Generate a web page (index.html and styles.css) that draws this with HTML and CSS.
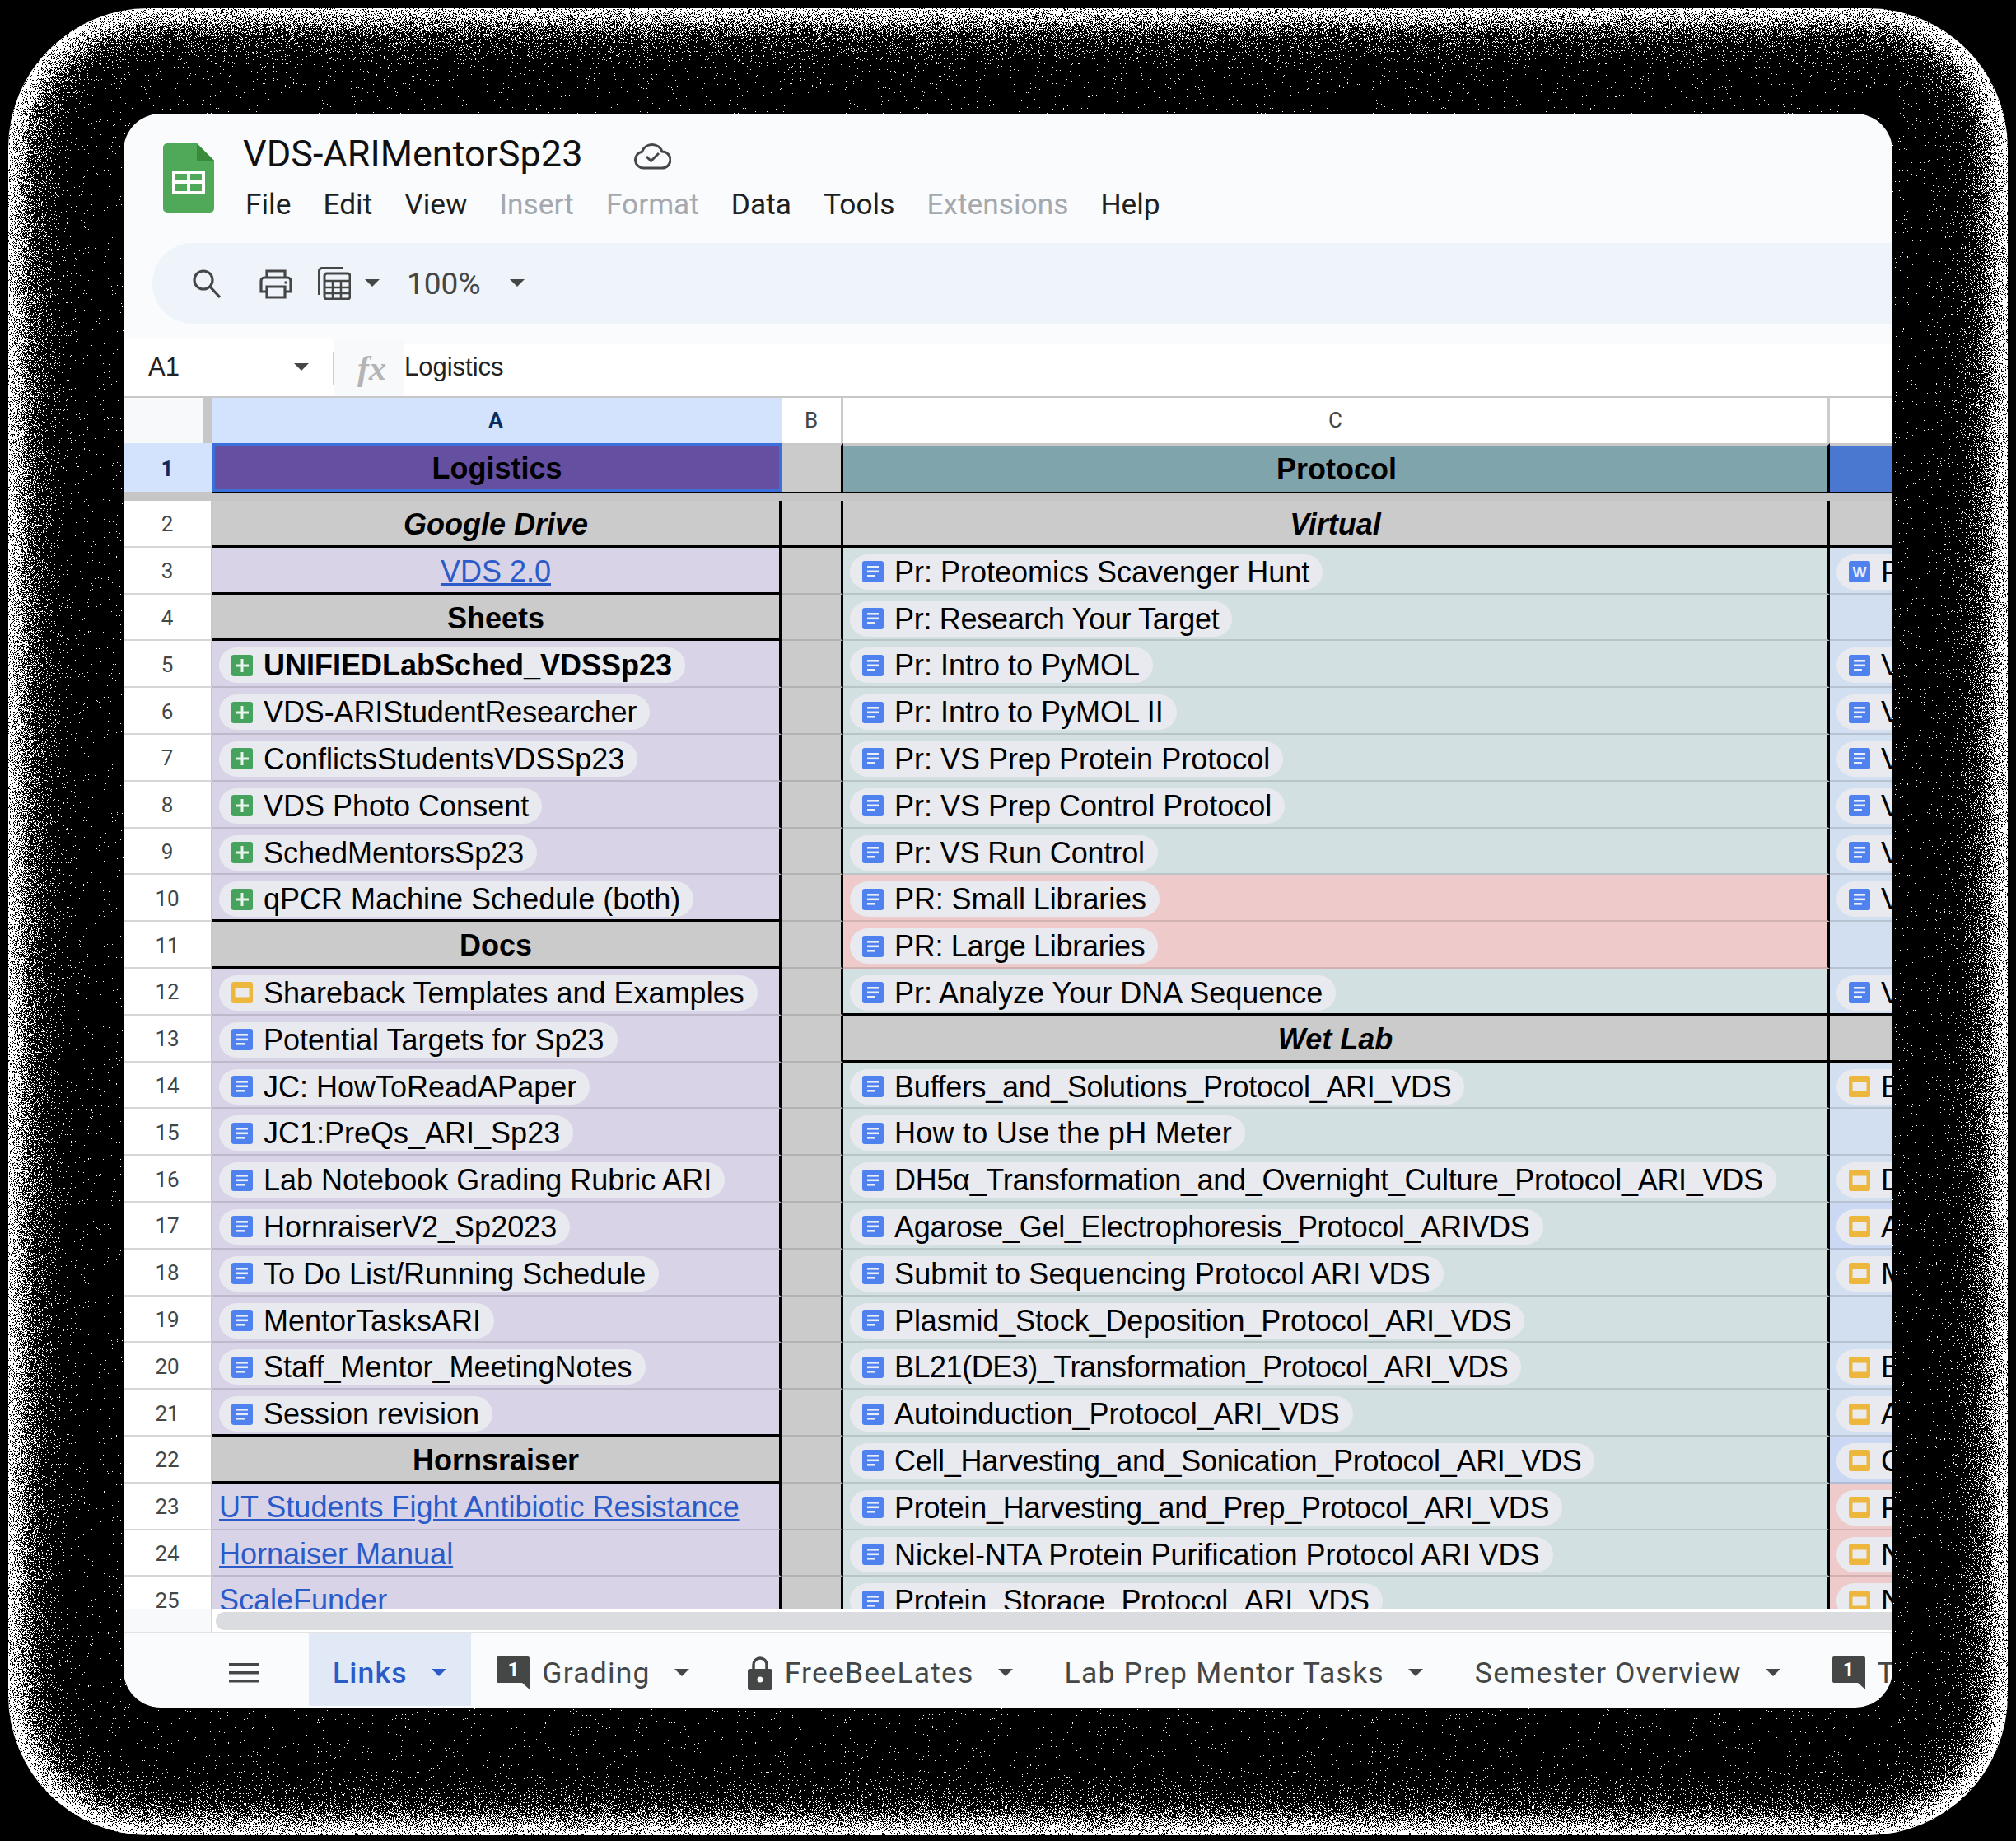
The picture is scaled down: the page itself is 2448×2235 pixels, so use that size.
FILE: index.html
```html
<!DOCTYPE html>
<html lang="en">
<head>
    <meta charset="UTF-8">
    <title>VDS-ARIMentorSp23</title>
    <link rel="stylesheet" href="styles.css">
</head>
<body>
    <svg class="backdrop" width="2448" height="2235" viewBox="0 0 2448 2235">
        <defs>
            <filter id="grain" filterUnits="userSpaceOnUse" x="0" y="0" width="2448" height="2235" color-interpolation-filters="sRGB">
                <feGaussianBlur in="SourceAlpha" stdDeviation="42" result="soft"/>
                <feTurbulence type="fractalNoise" baseFrequency="1.2" numOctaves="1" seed="4"/>
                <feColorMatrix values="0 0 0 0 1  0 0 0 0 1  0 0 0 0 1  1 0 0 0 0" result="noise"/>
                <feComposite in="soft" in2="noise" operator="arithmetic" k1="0" k2="-0.7" k3="1" k4="0.47"/>
                <feComponentTransfer>
                    <feFuncA type="discrete" tableValues="0 1"/>
                </feComponentTransfer>
                <feColorMatrix values="0 0 0 0 1  0 0 0 0 1  0 0 0 0 1  0 0 0 1 0"/>
                <feComposite in2="SourceAlpha" operator="in"/>
            </filter>
        </defs>
        <rect x="10" y="10" width="2428" height="2218" rx="170" fill="#fff" filter="url(#grain)"/>
    </svg>

    <svg class="sprites" width="0" height="0">
        <symbol id="doc" viewBox="0 0 26 26">
            <rect width="26" height="26" rx="3" fill="#4f82ee"/>
            <rect x="6" y="6" width="14" height="2.6" fill="#e9eefb"/>
            <rect x="6" y="11.5" width="14" height="2.6" fill="#e9eefb"/>
            <rect x="6" y="17" width="10" height="2.6" fill="#e9eefb"/>
        </symbol>
        <symbol id="slide" viewBox="0 0 26 26">
            <rect width="26" height="26" rx="3" fill="#ecb73c"/>
            <rect x="4.5" y="7.5" width="17" height="11" fill="#ebebeb"/>
        </symbol>
        <symbol id="sheet" viewBox="0 0 26 26">
            <rect width="26" height="26" rx="3" fill="#46a35e"/>
            <rect x="5" y="11.5" width="16" height="3" fill="#e9f4ec"/>
            <rect x="11.5" y="5" width="3" height="16" fill="#e9f4ec"/>
        </symbol>
        <symbol id="caret" viewBox="0 0 18 10">
            <path d="M0 0h18l-9 9z" fill="#444746"/>
        </symbol>
        <symbol id="note" viewBox="0 0 40 40">
            <path d="M2 0h36a2 2 0 0 1 2 2v38l-9-8H2a2 2 0 0 1-2-2V2a2 2 0 0 1 2-2z" fill="#444746"/>
        </symbol>
    </svg>

    <div class="window">
        <header class="titlebar">
            <svg class="logo" width="62" height="84" viewBox="0 0 62 84">
                <path d="M5 0h36l21 21v58a5 5 0 0 1-5 5H5a5 5 0 0 1-5-5V5a5 5 0 0 1 5-5z" fill="#4fa958"/>
                <path d="M41 0l21 21H41z" fill="#3a8a3c"/>
                <path d="M11 33h40v29H11zM15 37v8h14v-8zM33 37v8h14v-8zM15 49v9h14v-9zM33 49v9h14v-9z" fill="#fff" fill-rule="evenodd"/>
            </svg>
            <div class="titlebox">
                <div class="doctitle">
                    <span class="docname">VDS-ARIMentorSp23</span>
                    <svg class="cloud" width="46" height="34" viewBox="0 0 46 34" fill="none" stroke="#444746" stroke-width="3">
                        <path d="M12 32a10 10 0 0 1-1.500-19.800A13 13 0 0 1 35 12a10 10 0 0 1 0 20z"/>
                        <path d="M16 18l5.500 5.500L31 14"/>
                    </svg>
                </div>
                <nav class="menu">
                    <span>File</span><span>Edit</span><span>View</span>
                    <span class="off">Insert</span><span class="off">Format</span>
                    <span>Data</span><span>Tools</span>
                    <span class="off">Extensions</span><span>Help</span>
                </nav>
            </div>
        </header>

        <div class="toolbar">
            <svg class="tool-search" width="34" height="36" viewBox="0 0 34 36" fill="none" stroke="#444746" stroke-width="3.200">
                <circle cx="13" cy="13" r="11"/>
                <path d="M21 21l12 13"/>
            </svg>
            <svg class="tool-print" width="40" height="36" viewBox="0 0 40 36" fill="none" stroke="#444746" stroke-width="3.200">
                <path d="M9 10V2h22v8"/>
                <path d="M9 27H2V14a4 4 0 0 1 4-4h28a4 4 0 0 1 4 4v13h-7"/>
                <path d="M9 21h22v13H9z"/>
                <circle cx="32" cy="16" r="1" fill="#444746" stroke-width="1.500"/>
            </svg>
            <svg class="tool-calc" width="40" height="40" viewBox="0 0 40 40" fill="none" stroke="#444746" stroke-width="3">
                <path d="M31 1.500H5a3.500 3.500 0 0 0-3.500 3.500v29"/>
                <rect x="8" y="8" width="31" height="31" rx="3"/>
                <path d="M8 17h31M8 25h31M8 32h31M18 17v22M28 17v22" stroke-width="2.500"/>
            </svg>
            <svg class="caret tool-caret" width="18" height="10"><use href="#caret"/></svg>
            <span class="zoomval">100%</span>
            <svg class="caret zoom-caret" width="18" height="10"><use href="#caret"/></svg>
        </div>

        <div class="formula">
            <div class="namebox">
                <span>A1</span>
                <svg class="caret" width="18" height="10"><use href="#caret"/></svg>
            </div>
            <div class="fxbox"><i>fx</i></div>
            <div class="fxtext">Logistics</div>
        </div>

        <div class="row colheads">
            <div class="corner"></div>
            <div class="ch on">A</div>
            <div class="ch">B</div>
            <div class="ch">C</div>
            <div class="ch"></div>
        </div>
        <div class="row frozen">
            <div class="num on">1</div>
            <div class="h1 sel">Logistics</div>
            <div class="h1 blank"></div>
            <div class="h1 teal">Protocol</div>
            <div class="h1 blue"></div>
        </div>
        <div class="freeze-strip"></div>

        <div class="rows">
            <div class="row">
                <div class="num">2</div>
                <div class="cell a grey edge sub">Google Drive</div>
                <div class="cell b edge"></div>
                <div class="cell c grey edge sub">Virtual</div>
                <div class="cell d grey edge"></div>
            </div>
            <div class="row">
                <div class="num">3</div>
                <div class="cell a edge mid"><a href="#">VDS 2.0</a></div>
                <div class="cell b"></div>
                <div class="cell c"><span class="chip"><svg class="ic"><use href="#doc"/></svg>Pr: Proteomics Scavenger Hunt</span></div>
                <div class="cell d"><span class="chip cut"><svg class="ic" viewBox="0 0 26 26"><rect width="26" height="26" rx="3" fill="#4f82ee"/><text x="13" y="19.500" text-anchor="middle" class="w">W</text></svg>F</span></div>
            </div>
            <div class="row">
                <div class="num">4</div>
                <div class="cell a grey edge head">Sheets</div>
                <div class="cell b"></div>
                <div class="cell c"><span class="chip tight"><svg class="ic"><use href="#doc"/></svg>Pr: Research Your Target</span></div>
                <div class="cell d"></div>
            </div>
            <div class="row">
                <div class="num">5</div>
                <div class="cell a"><span class="chip bold"><svg class="ic"><use href="#sheet"/></svg>UNIFIEDLabSched_VDSSp23</span></div>
                <div class="cell b"></div>
                <div class="cell c"><span class="chip"><svg class="ic"><use href="#doc"/></svg>Pr: Intro to PyMOL</span></div>
                <div class="cell d"><span class="chip cut"><svg class="ic"><use href="#doc"/></svg>V</span></div>
            </div>
            <div class="row">
                <div class="num">6</div>
                <div class="cell a"><span class="chip slight"><svg class="ic"><use href="#sheet"/></svg>VDS-ARIStudentResearcher</span></div>
                <div class="cell b"></div>
                <div class="cell c"><span class="chip"><svg class="ic"><use href="#doc"/></svg>Pr: Intro to PyMOL II</span></div>
                <div class="cell d"><span class="chip cut"><svg class="ic"><use href="#doc"/></svg>V</span></div>
            </div>
            <div class="row">
                <div class="num">7</div>
                <div class="cell a"><span class="chip"><svg class="ic"><use href="#sheet"/></svg>ConflictsStudentsVDSSp23</span></div>
                <div class="cell b"></div>
                <div class="cell c"><span class="chip"><svg class="ic"><use href="#doc"/></svg>Pr: VS Prep Protein Protocol</span></div>
                <div class="cell d"><span class="chip cut"><svg class="ic"><use href="#doc"/></svg>V</span></div>
            </div>
            <div class="row">
                <div class="num">8</div>
                <div class="cell a"><span class="chip"><svg class="ic"><use href="#sheet"/></svg>VDS Photo Consent</span></div>
                <div class="cell b"></div>
                <div class="cell c"><span class="chip"><svg class="ic"><use href="#doc"/></svg>Pr: VS Prep Control Protocol</span></div>
                <div class="cell d"><span class="chip cut"><svg class="ic"><use href="#doc"/></svg>V</span></div>
            </div>
            <div class="row">
                <div class="num">9</div>
                <div class="cell a"><span class="chip"><svg class="ic"><use href="#sheet"/></svg>SchedMentorsSp23</span></div>
                <div class="cell b"></div>
                <div class="cell c"><span class="chip slight"><svg class="ic"><use href="#doc"/></svg>Pr: VS Run Control</span></div>
                <div class="cell d"><span class="chip cut"><svg class="ic"><use href="#doc"/></svg>V</span></div>
            </div>
            <div class="row">
                <div class="num">10</div>
                <div class="cell a edge"><span class="chip"><svg class="ic"><use href="#sheet"/></svg>qPCR Machine Schedule (both)</span></div>
                <div class="cell b"></div>
                <div class="cell c pink"><span class="chip slight"><svg class="ic"><use href="#doc"/></svg>PR: Small Libraries</span></div>
                <div class="cell d"><span class="chip cut"><svg class="ic"><use href="#doc"/></svg>V</span></div>
            </div>
            <div class="row">
                <div class="num">11</div>
                <div class="cell a grey edge head">Docs</div>
                <div class="cell b"></div>
                <div class="cell c pink"><span class="chip tight"><svg class="ic"><use href="#doc"/></svg>PR: Large Libraries</span></div>
                <div class="cell d"></div>
            </div>
            <div class="row">
                <div class="num">12</div>
                <div class="cell a"><span class="chip"><svg class="ic"><use href="#slide"/></svg>Shareback Templates and Examples</span></div>
                <div class="cell b"></div>
                <div class="cell c edge"><span class="chip"><svg class="ic"><use href="#doc"/></svg>Pr: Analyze Your DNA Sequence</span></div>
                <div class="cell d edge"><span class="chip cut"><svg class="ic"><use href="#doc"/></svg>V</span></div>
            </div>
            <div class="row">
                <div class="num">13</div>
                <div class="cell a"><span class="chip"><svg class="ic"><use href="#doc"/></svg>Potential Targets for Sp23</span></div>
                <div class="cell b"></div>
                <div class="cell c grey edge sub">Wet Lab</div>
                <div class="cell d grey edge"></div>
            </div>
            <div class="row">
                <div class="num">14</div>
                <div class="cell a"><span class="chip"><svg class="ic"><use href="#doc"/></svg>JC: HowToReadAPaper</span></div>
                <div class="cell b"></div>
                <div class="cell c"><span class="chip tight"><svg class="ic"><use href="#doc"/></svg>Buffers_and_Solutions_Protocol_ARI_VDS</span></div>
                <div class="cell d"><span class="chip cut"><svg class="ic"><use href="#slide"/></svg>B</span></div>
            </div>
            <div class="row">
                <div class="num">15</div>
                <div class="cell a"><span class="chip"><svg class="ic"><use href="#doc"/></svg>JC1:PreQs_ARI_Sp23</span></div>
                <div class="cell b"></div>
                <div class="cell c"><span class="chip loose"><svg class="ic"><use href="#doc"/></svg>How to Use the pH Meter</span></div>
                <div class="cell d"></div>
            </div>
            <div class="row">
                <div class="num">16</div>
                <div class="cell a"><span class="chip"><svg class="ic"><use href="#doc"/></svg>Lab Notebook Grading Rubric ARI</span></div>
                <div class="cell b"></div>
                <div class="cell c"><span class="chip tight"><svg class="ic"><use href="#doc"/></svg>DH5α_Transformation_and_Overnight_Culture_Protocol_ARI_VDS</span></div>
                <div class="cell d"><span class="chip cut"><svg class="ic"><use href="#slide"/></svg>D</span></div>
            </div>
            <div class="row">
                <div class="num">17</div>
                <div class="cell a"><span class="chip"><svg class="ic"><use href="#doc"/></svg>HornraiserV2_Sp2023</span></div>
                <div class="cell b"></div>
                <div class="cell c"><span class="chip tight"><svg class="ic"><use href="#doc"/></svg>Agarose_Gel_Electrophoresis_Protocol_ARIVDS</span></div>
                <div class="cell d deep"><span class="chip cut"><svg class="ic"><use href="#slide"/></svg>A</span></div>
            </div>
            <div class="row">
                <div class="num">18</div>
                <div class="cell a"><span class="chip"><svg class="ic"><use href="#doc"/></svg>To Do List/Running Schedule</span></div>
                <div class="cell b"></div>
                <div class="cell c"><span class="chip loose2"><svg class="ic"><use href="#doc"/></svg>Submit to Sequencing Protocol ARI VDS</span></div>
                <div class="cell d"><span class="chip cut"><svg class="ic"><use href="#slide"/></svg>M</span></div>
            </div>
            <div class="row">
                <div class="num">19</div>
                <div class="cell a"><span class="chip"><svg class="ic"><use href="#doc"/></svg>MentorTasksARI</span></div>
                <div class="cell b"></div>
                <div class="cell c"><span class="chip slight"><svg class="ic"><use href="#doc"/></svg>Plasmid_Stock_Deposition_Protocol_ARI_VDS</span></div>
                <div class="cell d"></div>
            </div>
            <div class="row">
                <div class="num">20</div>
                <div class="cell a"><span class="chip"><svg class="ic"><use href="#doc"/></svg>Staff_Mentor_MeetingNotes</span></div>
                <div class="cell b"></div>
                <div class="cell c"><span class="chip tighter"><svg class="ic"><use href="#doc"/></svg>BL21(DE3)_Transformation_Protocol_ARI_VDS</span></div>
                <div class="cell d"><span class="chip cut"><svg class="ic"><use href="#slide"/></svg>B</span></div>
            </div>
            <div class="row">
                <div class="num">21</div>
                <div class="cell a edge"><span class="chip"><svg class="ic"><use href="#doc"/></svg>Session revision</span></div>
                <div class="cell b"></div>
                <div class="cell c"><span class="chip slight"><svg class="ic"><use href="#doc"/></svg>Autoinduction_Protocol_ARI_VDS</span></div>
                <div class="cell d"><span class="chip cut"><svg class="ic"><use href="#slide"/></svg>A</span></div>
            </div>
            <div class="row">
                <div class="num">22</div>
                <div class="cell a grey edge head">Hornsraiser</div>
                <div class="cell b"></div>
                <div class="cell c"><span class="chip tight"><svg class="ic"><use href="#doc"/></svg>Cell_Harvesting_and_Sonication_Protocol_ARI_VDS</span></div>
                <div class="cell d deep"><span class="chip cut"><svg class="ic"><use href="#slide"/></svg>C</span></div>
            </div>
            <div class="row">
                <div class="num">23</div>
                <div class="cell a link"><a href="#">UT Students Fight Antibiotic Resistance</a></div>
                <div class="cell b"></div>
                <div class="cell c"><span class="chip tight"><svg class="ic"><use href="#doc"/></svg>Protein_Harvesting_and_Prep_Protocol_ARI_VDS</span></div>
                <div class="cell d pink"><span class="chip cut"><svg class="ic"><use href="#slide"/></svg>P</span></div>
            </div>
            <div class="row">
                <div class="num">24</div>
                <div class="cell a link"><a href="#">Hornaiser Manual</a></div>
                <div class="cell b"></div>
                <div class="cell c"><span class="chip"><svg class="ic"><use href="#doc"/></svg>Nickel-NTA Protein Purification Protocol ARI VDS</span></div>
                <div class="cell d pink"><span class="chip cut"><svg class="ic"><use href="#slide"/></svg>N</span></div>
            </div>
            <div class="row">
                <div class="num">25</div>
                <div class="cell a link"><a href="#">ScaleFunder</a></div>
                <div class="cell b"></div>
                <div class="cell c"><span class="chip tight"><svg class="ic"><use href="#doc"/></svg>Protein_Storage_Protocol_ARI_VDS</span></div>
                <div class="cell d pink"><span class="chip cut"><svg class="ic"><use href="#slide"/></svg>N</span></div>
            </div>
        </div>

        <div class="scrollrow">
            <div class="scrollcorner"></div>
            <div class="thumb"></div>
        </div>

        <footer class="tabs">
            <svg class="allsheets" width="36" height="24" viewBox="0 0 36 24" fill="#444746">
                <rect width="36" height="3.500"/>
                <rect y="10" width="36" height="3.500"/>
                <rect y="20" width="36" height="3.500"/>
            </svg>
            <div class="tab active"><span>Links</span><svg class="caret" width="18" height="10" viewBox="0 0 18 10"><path d="M0 0h18l-9 9z" fill="#2a5bc8"/></svg></div>
            <div class="tab">
                <span class="badge"><svg width="40" height="40"><use href="#note"/></svg><b>1</b></span>
                <span>Grading</span><svg class="caret" width="18" height="10"><use href="#caret"/></svg>
            </div>
            <div class="tab">
                <svg class="lock" width="30" height="41" viewBox="0 0 30 41">
                    <path d="M7 16v-6a8 8 0 0 1 16 0v6" fill="none" stroke="#444746" stroke-width="3.500"/>
                    <rect y="15" width="30" height="26" rx="3" fill="#444746"/>
                    <circle cx="15" cy="28" r="3.500" fill="#f9fbfd"/>
                </svg>
                <span>FreeBeeLates</span><svg class="caret" width="18" height="10"><use href="#caret"/></svg>
            </div>
            <div class="tab"><span>Lab Prep Mentor Tasks</span><svg class="caret" width="18" height="10"><use href="#caret"/></svg></div>
            <div class="tab"><span>Semester Overview</span><svg class="caret" width="18" height="10"><use href="#caret"/></svg></div>
            <div class="tab">
                <span class="badge"><svg width="40" height="40"><use href="#note"/></svg><b>1</b></span>
                <span>T</span>
            </div>
        </footer>
    </div>
</body>
</html>
```

FILE: styles.css
```css
* {
    box-sizing: border-box;
}
html, body {
    margin: 0;
    height: 2235px;
    overflow: hidden;
    background: #000;
}
body {
    position: relative;
    font-family: "Liberation Sans", Arial, sans-serif;
    padding: 138px 0 0 150px;
}
.backdrop {
    position: absolute;
    left: 0;
    top: 0;
}
.sprites {
    position: absolute;
}
.window {
    position: relative;
    width: 2148px;
    height: 1935px;
    border-radius: 45px;
    overflow: hidden;
    background: #f9fbfd;
}

/* title + menu */
.titlebar {
    display: flex;
    height: 157px;
    padding: 36px 0 0 48px;
}
.logo {
    flex: none;
}
.titlebox {
    margin-left: 35px;
    margin-top: -19px;
    font-family: Roboto, sans-serif;
}
.doctitle {
    display: flex;
    align-items: center;
    height: 62px;
}
.docname {
    font-size: 45px;
    color: #111;
}
.cloud {
    margin-left: 62px;
    margin-top: 6px;
}
.menu {
    display: flex;
    gap: 39px;
    margin-top: 10px;
    margin-left: 3px;
    font-size: 35.3px;
    color: #1f1f1f;
}
.menu .off {
    color: #a5a9ae;
}

/* toolbar */
.toolbar {
    display: flex;
    align-items: center;
    height: 98px;
    margin-left: 35px;
    padding-left: 49px;
    border-radius: 49px 0 0 49px;
    background: #eff3fa;
}
.tool-search {
    margin-top: 2px;
}
.tool-print {
    margin-left: 47px;
    margin-top: 2px;
}
.tool-calc {
    margin-left: 31px;
}
.tool-caret {
    margin-left: 17px;
}
.zoomval {
    margin-left: 33px;
    font-family: Roboto, sans-serif;
    font-size: 37px;
    color: #444746;
}
.zoom-caret {
    margin-left: 36px;
}
.caret {
    flex: none;
}

/* formula bar */
.formula {
    display: flex;
    height: 71px;
    margin-top: 19px;
    border-bottom: 2px solid #c7c7c7;
    font-size: 31px;
    color: #222;
}
.namebox {
    position: relative;
    display: flex;
    align-items: center;
    justify-content: space-between;
    width: 256px;
    padding: 0 31px 2px 30px;
    background: #fff;
}
.namebox::after {
    content: "";
    position: absolute;
    right: 0;
    top: 15px;
    width: 2px;
    height: 41px;
    background: #ccc;
}
.fxbox {
    width: 85px;
    padding-left: 28px;
    background: #f8f9fa;
    font-family: "Liberation Serif", serif;
    font-size: 42px;
    font-weight: 700;
    line-height: 70px;
    color: #b4b4b4;
}
.fxtext {
    flex: 1;
    margin-top: 6px;
    padding-top: 10px;
    background: #fff;
}

/* grid */
.row {
    display: grid;
    grid-template-columns: 108px 691px 75px 1198px 76px;
    height: 56.8px;
}
.colheads {
    height: 55px;
    background: #fff;
    font-family: Roboto, sans-serif;
    font-size: 26px;
    color: #444746;
    text-align: center;
    line-height: 55px;
}
.corner {
    background: #f8f9fa;
    border-right: 12px solid #c7c7c7;
}
.ch {
    border-right: 3px solid #ccc;
}
.ch:last-child {
    border-right: 0;
}
.ch.on {
    background: #d3e3fd;
    color: #0b2a5e;
    font-weight: 700;
    border-right-color: #d3e3fd;
}
.frozen {
    height: 61px;
    background: #fff;
}
.frozen .num {
    padding-top: 3px;
}
.num {
    display: flex;
    align-items: center;
    justify-content: center;
    padding-top: 2px;
    border-right: 2px solid #c7c7c7;
    border-bottom: 2px solid #d6d6d6;
    background: #fff;
    font-family: Roboto, sans-serif;
    font-size: 26px;
    color: #444746;
}
.num.on {
    background: #d3e3fd;
    color: #0b2a5e;
    font-weight: 700;
    border-right-color: #d3e3fd;
    border-bottom-color: #c6c6c6;
}
.h1 {
    display: flex;
    align-items: center;
    justify-content: center;
    padding-top: 2px;
    border-top: 3px solid #c9c9c9;
    border-bottom: 2px solid #000;
    font-size: 36px;
    font-weight: 700;
    color: #000;
}
.h1.sel {
    border-top: 0;
    background: #644fa0;
    box-shadow: inset 0 0 0 3px #3b6fd9;
}
.h1.blank {
    background: #cbcbcb;
    border-right: 3px solid #000;
}
.h1.teal {
    padding-left: 3px;
    background: #80a4ac;
    border-right: 3px solid #000;
}
.h1.blue {
    background: #4a78d0;
}
.freeze-strip {
    height: 9px;
    background: #c6c6c6;
}
.rows {
    height: 1345px;
    overflow: hidden;
}
.cell {
    display: flex;
    align-items: flex-start;
    min-width: 0;
    overflow: hidden;
    padding: 8px 0 0 8px;
    border-bottom: 2px solid rgba(0, 0, 0, .12);
    font-size: 36px;
    line-height: 41px;
    color: #000;
}
.a {
    background: #d8d3e7;
    border-right: 3px solid #000;
}
.b {
    background: #cbcbcb;
    border-right: 3px solid #000;
}
.c {
    background: #d2e0e1;
    border-right: 3px solid #000;
}
.d {
    background: #d2dff0;
}
.cell.deep {
    background: #cbd8f3;
}
.cell.pink {
    background: #eecbca;
}
.cell.grey {
    padding-left: 0;
    background: #cbcbcb;
    justify-content: center;
    font-weight: 700;
}
.cell.sub {
    font-style: italic;
}
.cell.edge {
    border-bottom: 3px solid #000;
}
.cell.mid {
    padding-left: 0;
    justify-content: center;
}
.cell a {
    color: #2a5bc8;
}
.chip {
    display: inline-flex;
    align-items: center;
    flex: none;
    height: 43px;
    padding: 0 16px 0 15px;
    border-radius: 22px;
    background: #e9eaef;
    white-space: nowrap;
}
.chip.bold {
    font-weight: 700;
}
.chip.cut {
    min-width: 200px;
}
/* names whose width differs from Arial's in the original */
.chip.slight {
    letter-spacing: -.12px;
}
.chip.tight {
    letter-spacing: -.3px;
}
.chip.tighter {
    letter-spacing: -.48px;
}
.chip.loose {
    letter-spacing: .25px;
}
.chip.loose2 {
    letter-spacing: .12px;
}
.ic {
    flex: none;
    width: 26px;
    height: 26px;
    margin-right: 13px;
}
.w {
    font-family: "Liberation Sans", sans-serif;
    font-size: 18px;
    font-weight: 700;
    fill: #e9eefb;
}

/* scroll + tabs */
.scrollrow {
    display: flex;
    height: 30px;
    border-bottom: 2px solid #e3e3e3;
    background: #fff;
}
.scrollcorner {
    width: 108px;
    border-right: 2px solid #d6d6d6;
    background: #f8f9fa;
}
.thumb {
    flex: 1;
    height: 22px;
    margin: 4px 0 0 4px;
    border-radius: 11px 0 0 11px;
    background: #dadce0;
}
.tabs {
    display: flex;
    align-items: center;
    height: 88px;
    padding-left: 128px;
    font-family: Roboto, sans-serif;
    font-size: 35.5px;
    letter-spacing: 1.2px;
    color: #444746;
}
.allsheets {
    flex: none;
    margin-right: 61px;
    margin-top: 7px;
}
.tab {
    display: flex;
    align-items: center;
    flex: none;
    height: 100%;
    padding: 8px 31.5px 0;
    white-space: nowrap;
}
.tab .caret {
    margin-left: 29px;
}
.tab.active {
    padding: 8px 30px 0 29px;
    background: #e1e9f7;
    color: #2a5bc8;
    font-weight: 500;
}
.badge {
    position: relative;
    display: flex;
    width: 40px;
    height: 40px;
    margin-right: 15px;
}
.badge b {
    position: absolute;
    left: 0;
    top: 0;
    width: 40px;
    text-align: center;
    font-size: 24px;
    line-height: 32px;
    letter-spacing: 0;
    color: #fff;
}
.lock {
    flex: none;
    margin-left: 8px;
    margin-right: 15px;
}
```
